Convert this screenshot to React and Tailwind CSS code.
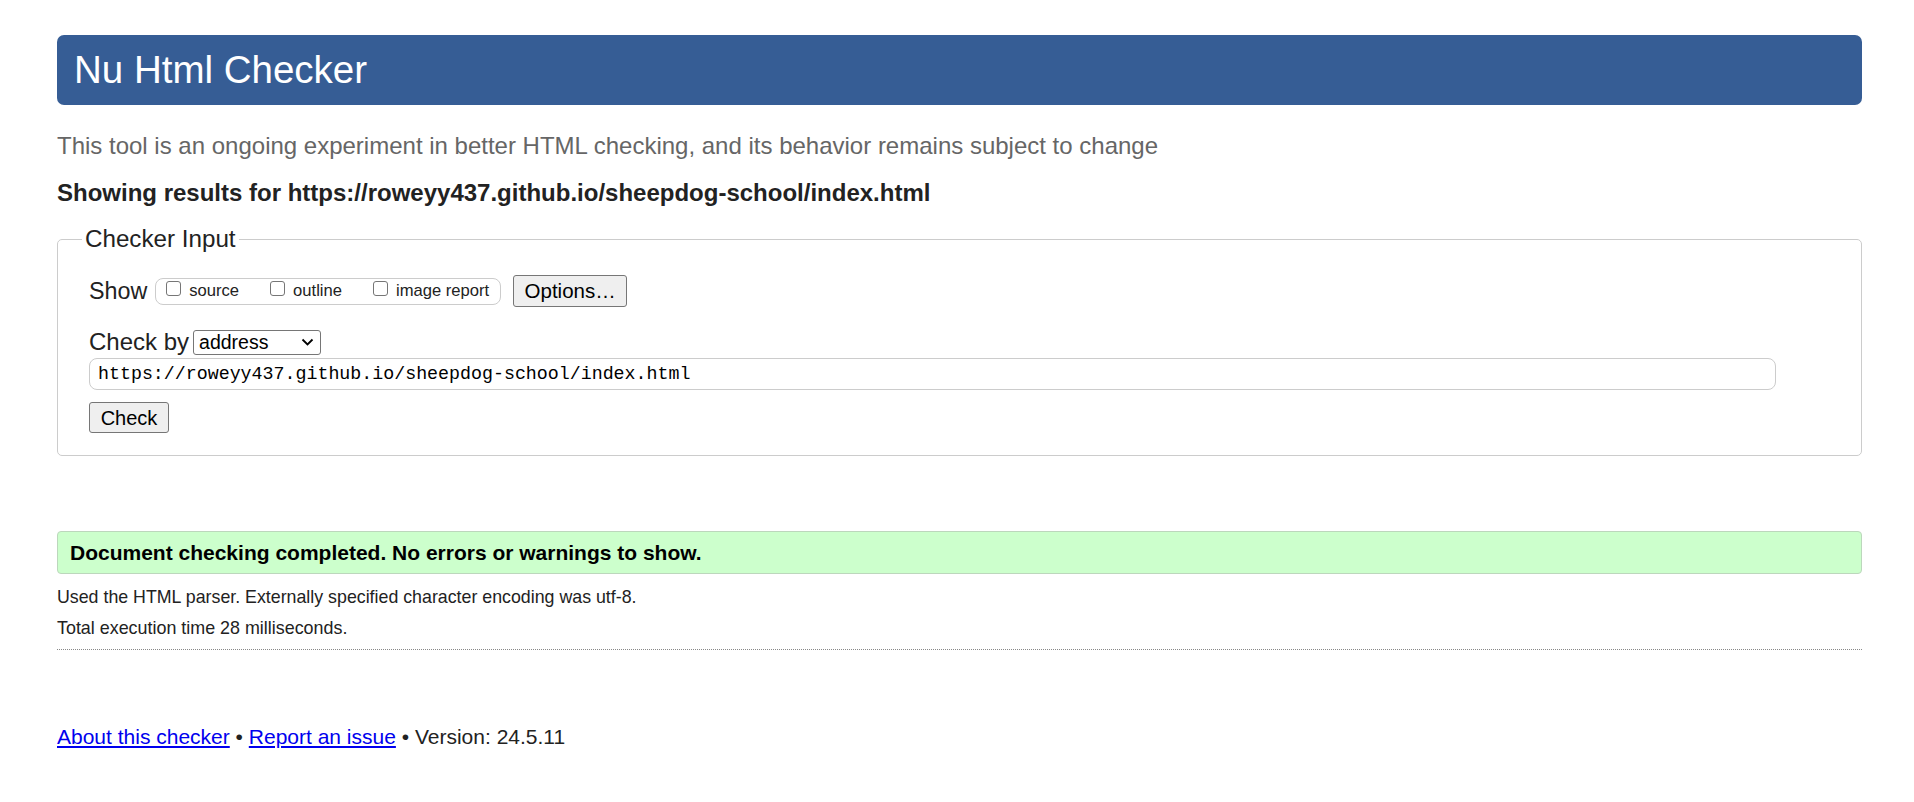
import React from "react";

function Box({ label }) {
  return (
    <span className="flex items-center">
      <span className="inline-block w-[15px] h-[15px] rounded-[3px] border border-[#767676] bg-white mt-[-6px]" />
      <span className="ml-[8px] text-[16.6px] leading-[20px] text-[#222]">{label}</span>
    </span>
  );
}

export default function App() {
  return (
    <div className="min-h-[802px] bg-white text-[#222]" style={{ fontFamily: '"Liberation Sans", Arial, sans-serif' }}>
      <div className="ml-[57px] w-[1805px] pt-[35px]">
        <div className="h-[70px] rounded-[7px] bg-[#365d95] flex items-center pl-[17px]">
          <h1 className="text-[38.5px] leading-[44px] text-white font-normal">Nu Html Checker</h1>
        </div>

        <p className="mt-[27px] text-[24px] leading-[28px] text-[#666]">
          This tool is an ongoing experiment in better HTML checking, and its behavior remains subject to change
        </p>
        <p className="mt-[19px] text-[24px] leading-[28px] font-bold text-[#222]">
          Showing results for https://roweyy437.github.io/sheepdog-school/index.html
        </p>

        <fieldset className="mt-[18px] border border-[#cccccc] rounded-[5px] pl-[31px] pr-[31px] pt-[22px] pb-[22px]">
          <legend className="ml-[-7px] px-[3px] text-[24.2px] leading-[28px] text-[#222]">Checker Input</legend>

          <div className="h-[32px] flex items-center">
            <span className="text-[23.3px] leading-[28px]">Show</span>
            <span className="ml-[8px] h-[27px] rounded-[8px] border border-[#cccccc] flex items-center pl-[10px] pr-[11px] gap-[31px]">
              <Box label="source" />
              <Box label="outline" />
              <Box label="image report" />
            </span>
            <button className="ml-[12px] w-[114px] h-[32px] rounded-[3px] border border-[#767676] bg-[#efefef] text-[20.5px] leading-[24px] text-black">
              Options…
            </button>
          </div>

          <div className="mt-[21px] h-[28px] flex items-center">
            <span className="text-[24px] leading-[28px]">Check by</span>
            <span className="ml-[4px] w-[128px] h-[25px] rounded-[3px] border border-[#767676] bg-white flex items-center justify-between pl-[5px] pr-[6px]">
              <span className="text-[19.5px] leading-[22px] text-black">address</span>
              <svg width="13" height="8" viewBox="0 0 13 8" fill="none">
                <path d="M1.5 1.5 L6.5 6.5 L11.5 1.5" stroke="#000" strokeWidth="1.8" />
              </svg>
            </span>
          </div>

          <div className="mt-[2px] w-[1687px] h-[32px] rounded-[8px] border border-[#cccccc] flex items-center pl-[8px]">
            <span className="text-[18.3px] leading-[22px] text-black" style={{ fontFamily: '"Liberation Mono", "DejaVu Sans Mono", monospace' }}>
              https://roweyy437.github.io/sheepdog-school/index.html
            </span>
          </div>

          <button className="mt-[12px] w-[80px] h-[31px] rounded-[3px] border border-[#767676] bg-[#efefef] text-[20px] leading-[24px] text-black">
            Check
          </button>
        </fieldset>

        <div className="mt-[75px] h-[43px] rounded-[4px] border border-[#bcd7bc] bg-[#ccffcc] flex items-center pl-[12px]">
          <p className="text-[21px] leading-[24px] font-bold text-black">
            Document checking completed. No errors or warnings to show.
          </p>
        </div>

        <p className="mt-[12px] text-[17.8px] leading-[22px] text-[#222]">
          Used the HTML parser. Externally specified character encoding was utf-8.
        </p>
        <p className="mt-[9px] text-[17.9px] leading-[22px] text-[#222]">Total execution time 28 milliseconds.</p>

        <div className="mt-[10px] border-t border-dotted border-[#888]" />

        <p className="mt-[75px] text-[21px] leading-[24px] text-[#222]">
          <a className="text-[#0000ee] underline">About this checker</a>
          {" • "}
          <a className="text-[#0000ee] underline">Report an issue</a>
          {" • Version: 24.5.11"}
        </p>
      </div>
    </div>
  );
}
